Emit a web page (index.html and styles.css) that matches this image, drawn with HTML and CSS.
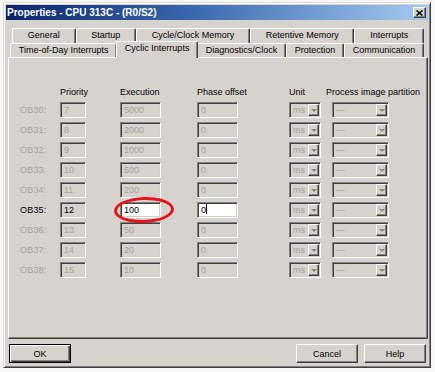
FILE: index.html
```html
<!DOCTYPE html>
<html lang="en">
<head>
    <meta charset="UTF-8">
    <title>Properties - CPU 313C - (R0/S2)</title>
    <link rel="stylesheet" href="styles.css">
</head>
<body>
    <div class="dialog">
        <div class="titlebar">
            <span class="title">Properties - CPU 313C - (R0/S2)</span>
            <div class="close">
                <svg width="7" height="6" viewBox="0 0 7 6"><path d="M0.5 0.5 L6.5 5.5 M6.5 0.5 L0.5 5.5" stroke="#000" stroke-width="1.6"/></svg>
            </div>
        </div>

        <div class="tabs">
            <div class="tab-row back">
                <div class="tab">General</div>
                <div class="tab">Startup</div>
                <div class="tab">Cycle/Clock Memory</div>
                <div class="tab">Retentive Memory</div>
                <div class="tab">Interrupts</div>
            </div>
            <div class="tab-row front">
                <div class="tab">Time-of-Day Interrupts</div>
                <div class="tab active">Cyclic Interrupts</div>
                <div class="tab">Diagnostics/Clock</div>
                <div class="tab">Protection</div>
                <div class="tab">Communication</div>
            </div>
        </div>

        <div class="panel">
            <div class="grid">
                <div></div>
                <div class="head">Priority</div>
                <div class="head">Execution</div>
                <div class="head">Phase offset</div>
                <div class="head">Unit</div>
                <div class="head pip">Process image partition</div>

                <div class="ob">OB30:</div>
                <div class="field prio">7</div>
                <div class="field exec">5000</div>
                <div class="field phase">0</div>
                <div class="combo unit"><span>ms</span><i class="drop"></i></div>
                <div class="combo part"><span>---</span><i class="drop"></i></div>

                <div class="ob">OB31:</div>
                <div class="field prio">8</div>
                <div class="field exec">2000</div>
                <div class="field phase">0</div>
                <div class="combo unit"><span>ms</span><i class="drop"></i></div>
                <div class="combo part"><span>---</span><i class="drop"></i></div>

                <div class="ob">OB32:</div>
                <div class="field prio">9</div>
                <div class="field exec">1000</div>
                <div class="field phase">0</div>
                <div class="combo unit"><span>ms</span><i class="drop"></i></div>
                <div class="combo part"><span>---</span><i class="drop"></i></div>

                <div class="ob">OB33:</div>
                <div class="field prio">10</div>
                <div class="field exec">500</div>
                <div class="field phase">0</div>
                <div class="combo unit"><span>ms</span><i class="drop"></i></div>
                <div class="combo part"><span>---</span><i class="drop"></i></div>

                <div class="ob">OB34:</div>
                <div class="field prio">11</div>
                <div class="field exec">200</div>
                <div class="field phase">0</div>
                <div class="combo unit"><span>ms</span><i class="drop"></i></div>
                <div class="combo part"><span>---</span><i class="drop"></i></div>

                <div class="ob on">OB35:</div>
                <div class="field prio on">12</div>
                <div class="field exec edit">100<span class="ring"></span></div>
                <div class="field phase edit">0<span class="caret"></span></div>
                <div class="combo unit"><span>ms</span><i class="drop"></i></div>
                <div class="combo part"><span>---</span><i class="drop"></i></div>

                <div class="ob">OB36:</div>
                <div class="field prio">13</div>
                <div class="field exec">50</div>
                <div class="field phase">0</div>
                <div class="combo unit"><span>ms</span><i class="drop"></i></div>
                <div class="combo part"><span>---</span><i class="drop"></i></div>

                <div class="ob">OB37:</div>
                <div class="field prio">14</div>
                <div class="field exec">20</div>
                <div class="field phase">0</div>
                <div class="combo unit"><span>ms</span><i class="drop"></i></div>
                <div class="combo part"><span>---</span><i class="drop"></i></div>

                <div class="ob">OB38:</div>
                <div class="field prio">15</div>
                <div class="field exec">10</div>
                <div class="field phase">0</div>
                <div class="combo unit"><span>ms</span><i class="drop"></i></div>
                <div class="combo part"><span>---</span><i class="drop"></i></div>
            </div>
        </div>

        <div class="buttons">
            <button class="btn default">OK</button>
            <span class="spacer"></span>
            <button class="btn">Cancel</button>
            <button class="btn">Help</button>
        </div>
    </div>
</body>
</html>
```

FILE: styles.css
```css
body {
    margin: 0;
    background-color: #f7f7f5;
    font-family: 'Liberation Sans', Arial, sans-serif;
    font-size: 9px;
    color: #000;
}
.dialog {
    margin: 2px 0 0 3px;
    width: 428px;
    height: 366px;
    box-sizing: border-box;
    padding: 2px;
    background-color: #d6d3ce;
    border: 1px solid;
    border-color: #dedbd6 #404040 #404040 #dedbd6;
    box-shadow: inset 1px 1px #fff, inset -1px -1px #808080;
    display: flex;
    flex-direction: column;
}
.titlebar {
    height: 15px;
    display: flex;
    align-items: center;
    padding: 0 2px 0 1px;
    background: linear-gradient(to right, #0a246a, #3a6ab0 45%, #a6caf0);
}
.title {
    flex: 1;
    color: #fff;
    font-weight: bold;
    font-size: 10px;
    white-space: nowrap;
}
.close {
    width: 13px;
    height: 11px;
    box-sizing: border-box;
    background-color: #d6d3ce;
    border: 1px solid;
    border-color: #fff #404040 #404040 #fff;
    box-shadow: inset -1px -1px #808080;
    display: flex;
    align-items: center;
    justify-content: center;
}

/* tabs */
.tabs {
    margin-top: 8px;
}
.tab-row {
    display: flex;
}
.tab-row.back {
    height: 15px;
    margin: 0 4px 0 6px;
}
.tab-row.front {
    height: 14px;
    margin: 0 4px 0 4px;
}
.tab {
    flex: auto;
    text-align: center;
    line-height: 13px;
    white-space: nowrap;
    border-top: 1px solid #fff;
    border-left: 1px solid #fff;
    border-right: 1px solid #404040;
    box-shadow: inset -1px 0 #808080;
    border-radius: 2px 2px 0 0;
}
.tab.active {
    position: relative;
    z-index: 1;
    margin: -2px -1px -1px -1px;
    background-color: #d6d3ce;
}

/* panel */
.panel {
    margin-left: 2px;
    height: 282px;
    box-sizing: border-box;
    border: 1px solid;
    border-color: #fff #404040 #404040 #fff;
    box-shadow: inset -1px -1px #808080;
    padding: 24px 0 0 11px;
}
.grid {
    display: grid;
    grid-template-columns: 40px 60px 77px 92px 43px 57px;
    grid-auto-rows: 16px;
    row-gap: 4px;
    align-items: center;
}
.head {
    align-self: end;
    line-height: 12px;
    white-space: nowrap;
}
.head.pip {
    margin-left: -6px;
}
.ob {
    color: #a4a19c;
    letter-spacing: 0.2px;
}
.ob.on {
    color: #000;
}
.field, .combo {
    box-sizing: border-box;
    height: 16px;
    border: 1px solid;
    border-color: #808080 #fff #fff #808080;
    box-shadow: inset 1px 1px #404040, inset -1px -1px #d4d0c8;
    background-color: #d6d3ce;
    color: #a4a19c;
}
.field {
    padding: 0 3px;
    line-height: 14px;
}
.field.prio {
    width: 26px;
}
.field.exec, .field.phase {
    width: 41px;
}
.field.on {
    color: #000;
}
.field.edit {
    position: relative;
    background-color: #fff;
    color: #000;
}
.caret {
    display: inline-block;
    width: 1px;
    height: 10px;
    background-color: #000;
    vertical-align: -1px;
}
.ring {
    position: absolute;
    left: -7px;
    top: -6px;
    width: 60px;
    height: 26px;
    box-sizing: border-box;
    border: 3px solid #e2141c;
    border-radius: 50%;
    transform: rotate(-2deg);
}
.combo {
    display: flex;
}
.combo.unit {
    width: 32px;
}
.combo.part {
    width: 57px;
}
.combo span {
    flex: 1;
    padding-left: 3px;
    line-height: 14px;
}
.drop {
    width: 11px;
    margin: 1px;
    box-sizing: border-box;
    background-color: #d6d3ce;
    border: 1px solid;
    border-color: #fff #404040 #404040 #fff;
    box-shadow: inset -1px -1px #808080;
    display: flex;
    align-items: center;
    justify-content: center;
}
.drop::after {
    content: "";
    border-left: 3px solid transparent;
    border-right: 3px solid transparent;
    border-top: 3px solid #8c8984;
}

/* buttons */
.buttons {
    display: flex;
    gap: 6px;
    margin-top: 5px;
    padding: 0 2px 0 3px;
}
.spacer {
    flex: 1;
}
.btn {
    width: 62px;
    height: 19px;
    padding: 0;
    font: inherit;
    color: #000;
    background-color: #d6d3ce;
    border: 1px solid;
    border-color: #fff #404040 #404040 #fff;
    box-shadow: inset -1px -1px #808080;
}
.btn.default {
    border-color: #000;
    box-shadow: inset 1px 1px #fff, inset -1px -1px #404040, inset -2px -2px #808080;
}
```
